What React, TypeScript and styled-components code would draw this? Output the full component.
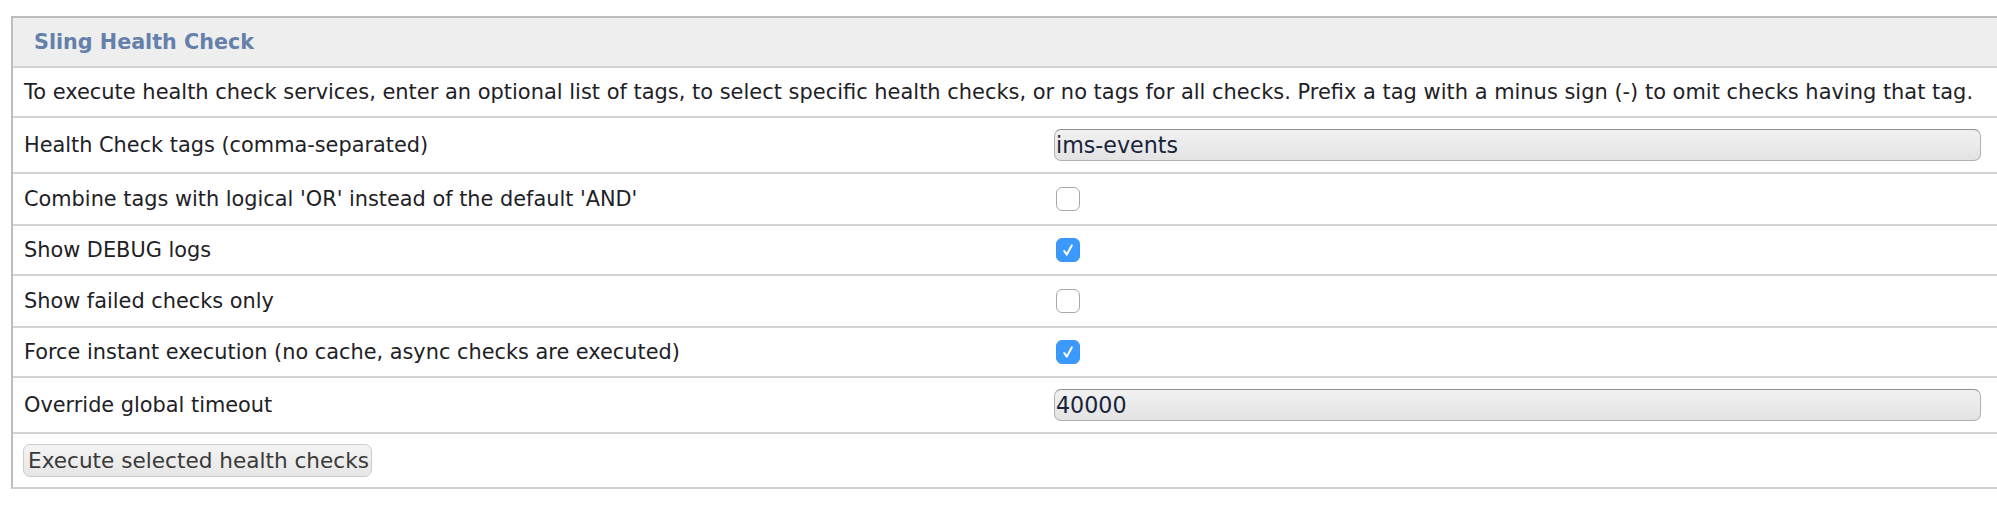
import React from "react";
import styled, { createGlobalStyle } from "styled-components";

const Global = createGlobalStyle`
  html, body { margin: 0; padding: 0; background: #ffffff; overflow: hidden; }
  body { font-family: "DejaVu Sans", Verdana, sans-serif; }
`;

const Page = styled.div`
  padding: 16px 0 0 11px;
`;

const Panel = styled.section`
  border-top: 2px solid #bdbdbd;
  border-left: 2px solid #bdbdbd;
  border-bottom: 2px solid #cfcfcf;
  width: calc(100vw - 11px);
  box-sizing: border-box;
`;

const Header = styled.h2`
  margin: 0;
  height: 48px;
  display: flex;
  align-items: center;
  padding-left: 21px;
  background: #eeeeee;
  border-bottom: 2px solid #d2d2d2;
  font-size: 20.7px;
  font-weight: bold;
  color: #6580aa;
`;

const Row = styled.div<{ $h: number }>`
  display: grid;
  grid-template-columns: 1031px 1fr;
  align-items: center;
  min-height: ${(p) => p.$h}px;
  border-bottom: 2px solid #d2d2d2;
  &:last-child { border-bottom: none; }
`;

const Text = styled.div<{ $span?: boolean }>`
  grid-column: ${(p) => (p.$span ? "1 / -1" : "auto")};
  padding-left: 11px;
  font-size: ${(p) => (p.$span ? "20.95px" : "20.85px")};
  color: #1e2126;
  white-space: nowrap;
`;

const Value = styled.div`
  display: flex;
  align-items: center;
  padding: 0 16px 0 10px;
`;

const TextInput = styled.input`
  width: 100%;
  height: 32px;
  box-sizing: border-box;
  border: 1px solid #b0b0b0;
  border-top-color: #8f8f8f;
  border-radius: 7px;
  background: linear-gradient(#f1f1f1, #e3e3e3);
  padding: 0 0 0 1px;
  font-family: "DejaVu Sans", Verdana, sans-serif;
  font-size: 22.2px;
  color: #18243a;
  outline: none;
`;

const Box = styled.span<{ $on: boolean }>`
  display: inline-flex;
  align-items: center;
  justify-content: center;
  width: 24px;
  height: 24px;
  margin-left: 2px;
  box-sizing: border-box;
  border-radius: 6px;
  border: 1px solid ${(p) => (p.$on ? "#3a95f6" : "#a9a9a9")};
  background: ${(p) => (p.$on ? "#3b99fc" : "#ffffff")};
`;

const ButtonCell = styled.div`
  grid-column: 1 / -1;
  padding-left: 10px;
`;

const Button = styled.button`
  height: 33px;
  padding: 0 2px 0 4px;
  border: 1px solid #cccccc;
  border-radius: 7px;
  background: linear-gradient(#f4f4f4, #e6e6e6);
  font-family: "DejaVu Sans", Verdana, sans-serif;
  font-size: 21.6px;
  color: #3a3a3a;
`;

function Check({ on }: { on: boolean }) {
  return (
    <Box $on={on} role="checkbox" aria-checked={on}>
      {on && (
        <svg width="14" height="16" viewBox="0 0 14 16">
          <path d="M3.2 9 L5.8 12.6 L10.8 3.4" fill="none" stroke="#ffffff" strokeWidth="2" strokeLinecap="round" strokeLinejoin="round" />
        </svg>
      )}
    </Box>
  );
}

export default function App() {
  return (
    <>
      <Global />
      <Page>
        <Panel>
          <Header>Sling Health Check</Header>
          <Row $h={48}>
            <Text $span>
              To execute health check services, enter an optional list of tags, to select specific health checks, or no tags for all checks. Prefix a tag with a minus sign (-) to omit checks having that tag.
            </Text>
          </Row>
          <Row $h={54}>
            <Text>Health Check tags (comma-separated)</Text>
            <Value><TextInput defaultValue="ims-events" /></Value>
          </Row>
          <Row $h={50}>
            <Text>Combine tags with logical 'OR' instead of the default 'AND'</Text>
            <Value><Check on={false} /></Value>
          </Row>
          <Row $h={48}>
            <Text>Show DEBUG logs</Text>
            <Value><Check on={true} /></Value>
          </Row>
          <Row $h={50}>
            <Text>Show failed checks only</Text>
            <Value><Check on={false} /></Value>
          </Row>
          <Row $h={48}>
            <Text>Force instant execution (no cache, async checks are executed)</Text>
            <Value><Check on={true} /></Value>
          </Row>
          <Row $h={54}>
            <Text>Override global timeout</Text>
            <Value><TextInput defaultValue="40000" /></Value>
          </Row>
          <Row $h={53}>
            <ButtonCell><Button>Execute selected health checks</Button></ButtonCell>
          </Row>
        </Panel>
      </Page>
    </>
  );
}
